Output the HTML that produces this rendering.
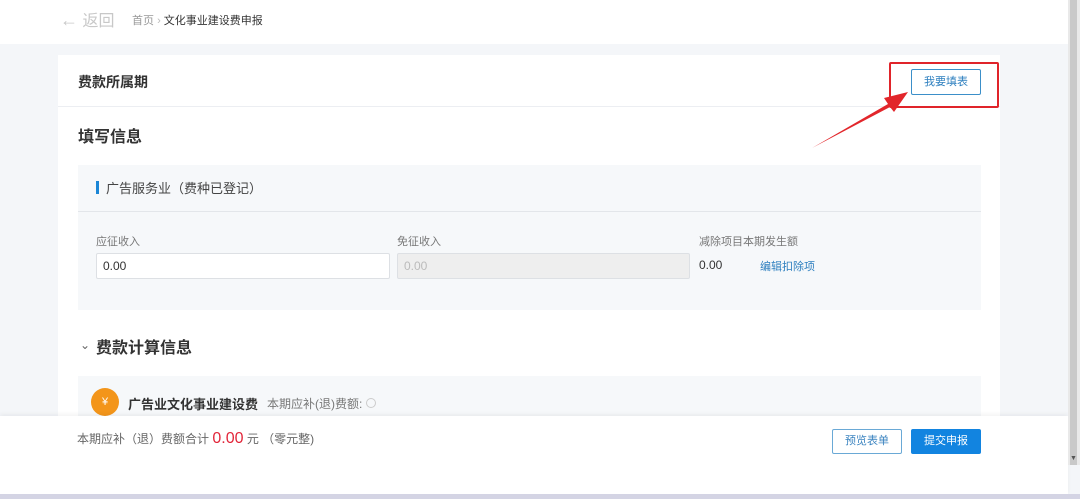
<!DOCTYPE html>
<html><head><meta charset="utf-8"><style>
*{margin:0;padding:0;box-sizing:border-box}
body{width:1080px;height:499px;overflow:hidden;background:#f4f6f9;font-family:"Liberation Sans","Noto Sans CJK SC",sans-serif;position:relative;color:#333}
.a{position:absolute}
</style></head><body>
<div class="a" style="left:0;top:0;width:1068px;height:44px;background:#fff"></div>
<div class="a" style="left:60px;top:7px;font-size:16px;color:#c8c8c8"><span style="font-size:18px">←</span> 返回</div>
<div class="a" style="left:132px;top:12px;font-size:11px;color:#999">首页 <span style="color:#bbb">›</span> <span style="color:#333">文化事业建设费申报</span></div>
<div class="a" style="left:58px;top:55px;width:942px;height:370px;background:#fff"></div>
<div class="a" style="left:58px;top:106px;width:942px;height:1px;background:#eceef2"></div>
<div class="a" style="left:78px;top:72px;font-size:14px;font-weight:bold;color:#333">费款所属期</div>
<div class="a" style="left:911px;top:69px;width:70px;height:26px;border:1px solid #3b8fc9;border-radius:2px;font-size:11px;color:#2d7fbf;text-align:center;line-height:24px">我要填表</div>
<div class="a" style="left:889px;top:62px;width:110px;height:46px;border:2px solid #e0242a;border-radius:2px"></div>
<svg class="a" style="left:810px;top:90px" width="100" height="62"><path d="M2 58 L78 14 L74 8 L98 2 L84 22 L80 17 Z" fill="#e2262b"/></svg>
<div class="a" style="left:78px;top:123px;font-size:16px;font-weight:bold;color:#333">填写信息</div>
<div class="a" style="left:78px;top:165px;width:903px;height:145px;background:#f6f8fa"></div>
<div class="a" style="left:78px;top:211px;width:903px;height:1px;background:#e3e6ea"></div>
<div class="a" style="left:96px;top:181px;width:3px;height:13px;background:#1b86d6"></div>
<div class="a" style="left:106px;top:178px;font-size:13px;color:#444">广告服务业（费种已登记）</div>
<div class="a" style="left:96px;top:233px;font-size:11px;color:#777">应征收入</div>
<div class="a" style="left:397px;top:233px;font-size:11px;color:#777">免征收入</div>
<div class="a" style="left:699px;top:233px;font-size:11px;color:#777">减除项目本期发生额</div>
<div class="a" style="left:96px;top:253px;width:294px;height:26px;background:#fff;border:1px solid #dde0e4;border-radius:2px;font-size:12px;color:#333;padding:5px 6px">0.00</div>
<div class="a" style="left:397px;top:253px;width:293px;height:26px;background:#eeeeee;border:1px solid #dde0e4;border-radius:2px;font-size:12px;color:#bbb;padding:5px 6px">0.00</div>
<div class="a" style="left:699px;top:258px;font-size:12px;color:#333">0.00</div>
<div class="a" style="left:760px;top:258px;font-size:11px;color:#2d7fbf">编辑扣除项</div>
<div class="a" style="left:80px;top:338px;font-size:12px;color:#666">⌄</div>
<div class="a" style="left:96px;top:334px;font-size:16px;font-weight:bold;color:#333">费款计算信息</div>
<div class="a" style="left:78px;top:376px;width:903px;height:45px;background:#f6f8fa"></div>
<div class="a" style="left:91px;top:388px;width:28px;height:28px;border-radius:50%;background:#f3951a;color:#fff;font-size:11px;text-align:center;line-height:28px">¥</div>
<div class="a" style="left:128px;top:394px;font-size:13px;font-weight:bold;color:#333">广告业文化事业建设费</div>
<div class="a" style="left:267px;top:395px;font-size:12px;color:#777">本期应补(退)费额: <span style="display:inline-block;width:10px;height:10px;border:1px solid #ccc;border-radius:50%"></span></div>
<div class="a" style="left:0;top:416px;width:1068px;height:78px;background:#fff;box-shadow:0 -2px 4px rgba(0,0,0,0.05)"></div>
<div class="a" style="left:77px;top:430px;font-size:12px;color:#666">本期应补（退）费额合计 <span style="color:#e2263a;font-size:16px">0.00</span> 元 （零元整)</div>
<div class="a" style="left:832px;top:429px;width:70px;height:25px;border:1px solid #6aa9d6;border-radius:2px;font-size:11px;color:#3b84c0;text-align:center;line-height:23px">预览表单</div>
<div class="a" style="left:911px;top:429px;width:70px;height:25px;background:#1284e0;border-radius:2px;font-size:11px;color:#fff;text-align:center;line-height:25px">提交申报</div>
<div class="a" style="left:1068px;top:0;width:12px;height:465px;background:#e9e9e9"></div>
<div class="a" style="left:1070px;top:0;width:7px;height:465px;background:#c9c9c9"></div>
<div class="a" style="left:1070px;top:455px;font-size:7px;color:#555">▼</div>
<div class="a" style="left:0;top:494px;width:1080px;height:5px;background:#d4d4e4"></div>
</body></html>
